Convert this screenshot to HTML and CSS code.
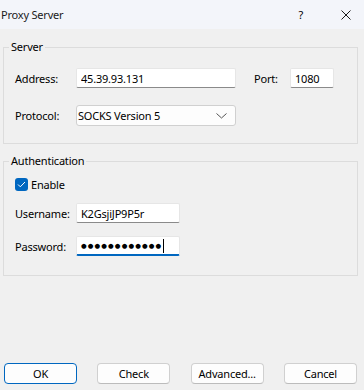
FILE: index.html
```html
<!DOCTYPE html>
<html lang="en">
<head>
    <meta charset="UTF-8">
    <meta name="viewport" content="width=device-width, initial-scale=1.0">
    <title>Proxy Server</title>
    <link rel="stylesheet" href="styles.css">
</head>
<body>
    <div class="window">
        <div class="titlebar">
            <span class="title">Proxy Server</span>
            <div class="title-btns">
                <span class="help">?</span>
                <svg class="close" width="10" height="10" viewBox="0 0 10 10">
                    <path d="M0.5 0.5 L9.5 9.5 M9.5 0.5 L0.5 9.5" stroke="#1a1a1a" stroke-width="1"/>
                </svg>
            </div>
        </div>

        <fieldset class="group server">
            <legend>Server</legend>
            <div class="row">
                <label class="lbl">Address:</label>
                <input class="edit addr" value="45.39.93.131">
                <label class="lbl port-lbl">Port:</label>
                <input class="edit port" value="1080">
            </div>
            <div class="row row-combo">
                <label class="lbl">Protocol:</label>
                <div class="combo">
                    <span>SOCKS Version 5</span>
                    <svg class="chevron" width="11" height="6" viewBox="0 0 11 6">
                        <path d="M0.5 0.5 L5.5 5 L10.5 0.5" fill="none" stroke="#555" stroke-width="1"/>
                    </svg>
                </div>
            </div>
        </fieldset>

        <fieldset class="group auth">
            <legend>Authentication</legend>
            <div class="check">
                <span class="box">
                    <svg width="9" height="7" viewBox="0 0 9 7">
                        <path d="M1 3.5 L3.3 5.8 L8 1" fill="none" stroke="#fff" stroke-width="1"/>
                    </svg>
                </span>
                Enable
            </div>
            <div class="row row-user">
                <label class="lbl">Username:</label>
                <input class="edit short" value="K2GsjiJP9P5r">
            </div>
            <div class="row row-pass">
                <label class="lbl">Password:</label>
                <div class="edit short focused"><span class="dots">●●●●●●●●●●●●</span><span class="caret"></span></div>
            </div>
        </fieldset>

        <div class="buttons">
            <button class="btn default">OK</button>
            <button class="btn">Check</button>
            <button class="btn">Advanced...</button>
            <button class="btn">Cancel</button>
        </div>
    </div>
</body>
</html>
```

FILE: styles.css
```css
*{
    box-sizing: border-box;
}
body{
    margin: 0;
    background: #f0f0f0;
    font-family: "Noto Sans", sans-serif;
    font-size: 11px;
    letter-spacing: -0.2px;
    color: #000;
}
.window{
    height: 100vh;
    display: flex;
    flex-direction: column;
}
.titlebar{
    height: 29px;
    background: #f3f5fa;
    display: flex;
    justify-content: space-between;
    align-items: center;
    padding: 0 13px 0 1px;
}
.title{
    color: #1a1a1a;
}
.title-btns{
    display: flex;
    align-items: center;
}
.help{
    margin-right: 38px;
}
.group{
    margin: 10px 6px 0 3px;
    border: 1px solid #dcdcdc;
    padding: 13px 0 17px 11px;
    min-width: 0;
}
.group legend{
    margin-left: -6px;
    padding: 0 2px;
    line-height: 16px;
}
.auth{
    margin-top: 9px;
    padding-top: 9px;
    padding-bottom: 19px;
}
.row{
    display: flex;
    align-items: center;
}
.row-combo{
    margin-top: 17px;
}
.row-user{
    margin-top: 12px;
}
.row-pass{
    margin-top: 13px;
}
.lbl{
    width: 61px;
}
.port-lbl{
    width: 36px;
    margin-left: 18px;
}
.edit{
    height: 20px;
    border: 1px solid #e6e6e6;
    border-bottom-color: #8a8a8a;
    border-radius: 2px;
    background: #fff;
    padding: 0 4px;
    font: inherit;
    letter-spacing: inherit;
    color: #000;
    outline: 0;
}
.addr{
    width: 160px;
}
.port{
    width: 44px;
}
.short{
    width: 104px;
}
.focused{
    display: flex;
    align-items: center;
    border-bottom: 2px solid #0067c0;
}
.dots{
    font-family: "DejaVu Sans", sans-serif;
    font-size: 6.5px;
    letter-spacing: 1.1px;
}
.caret{
    width: 1px;
    height: 14px;
    background: #000;
    margin-left: 1px;
}
.combo{
    width: 160px;
    height: 21px;
    border: 1px solid #d0d0d0;
    border-radius: 3px;
    background: #fdfdfd;
    display: flex;
    align-items: center;
    justify-content: space-between;
    padding: 0 8px 0 1px;
}
.check{
    display: flex;
    align-items: center;
    height: 13px;
}
.box{
    width: 13px;
    height: 13px;
    border-radius: 3px;
    background: #0067c0;
    display: flex;
    align-items: center;
    justify-content: center;
    margin-right: 3px;
}
.buttons{
    margin-top: auto;
    display: flex;
    justify-content: space-between;
    padding: 0 7px 6px 4px;
}
.btn{
    width: 73px;
    height: 21px;
    background: #fdfdfd;
    border: 1px solid #d0d0d0;
    border-bottom-color: #bcbcbc;
    border-radius: 4px;
    font-family: inherit;
    font-size: 11px;
    letter-spacing: inherit;
    color: #000;
    padding: 0;
}
.btn.default{
    border: 1px solid #0067c0;
}
```
